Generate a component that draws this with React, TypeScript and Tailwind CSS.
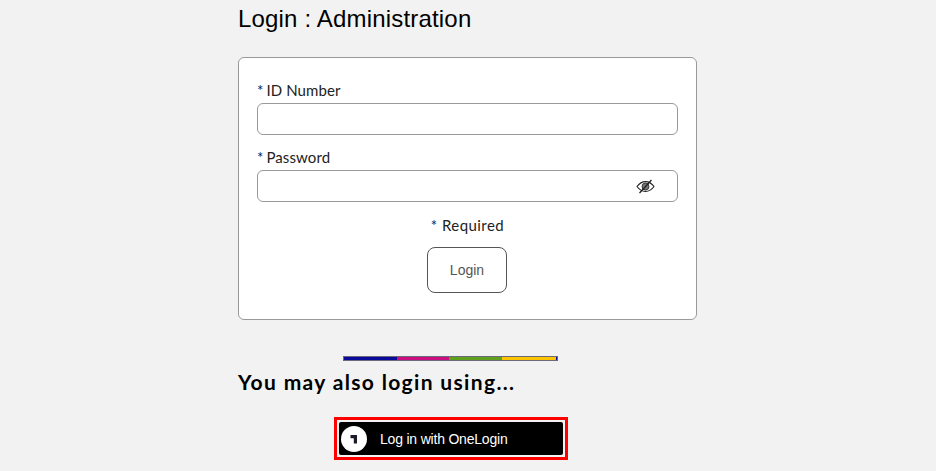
const gothic = "font-['Lato','Noto_Sans',sans-serif]";

function EyeOff() {
  return (
    <svg width="19" height="15" viewBox="0 0 19 15" fill="none" stroke="#222" strokeWidth="1.1">
      <path d="M1 7.500C3.500 4 6.300 2.600 9.500 2.600s6 1.400 8.500 4.900c-2.500 3.500-5.300 4.900-8.500 4.900S3.500 11 1 7.500z" />
      <circle cx="9.500" cy="7.500" r="3.500" fill="#777" strokeWidth="0.8" />
      <path d="M15.500 1L3.500 14" strokeWidth="1.300" />
    </svg>
  );
}

function OneLoginMark() {
  return (
    <svg width="26" height="26" viewBox="0 0 26 26">
      <circle cx="13" cy="13" r="13" fill="#fff" />
      <path d="M9.500 9h6.500v8.500h-3.200v-5.300h-3.300z" fill="#1c1c28" />
    </svg>
  );
}

function Field({ label, children }: { label: string; children?: React.ReactNode }) {
  return (
    <div>
      <label className={`block text-[15px] leading-[20px] tracking-[0.1px] text-[#222] ${gothic}`}>
        <span className="mr-[-1px] text-[#00205b]">*</span> {label}
      </label>
      <div className="mt-[3px] flex h-[32px] items-center justify-end rounded-[6px] border border-[#999] bg-white pr-[22px]">
        {children}
      </div>
    </div>
  );
}

export default function App() {
  return (
    <div className="h-[471px] overflow-hidden bg-[#f2f2f2] font-['Liberation_Sans',sans-serif]">
      <div className="ml-[238px] w-[459px]">
        <h1 className="pt-[5px] text-[24px] leading-[28px] tracking-[0.18px] text-black">Login : Administration</h1>

        <div className="mt-[24px] h-[263px] rounded-[6px] border border-[#999] bg-white px-[18px] pt-[22px]">
          <Field label="ID Number" />
          <div className="mt-[12px]">
            <Field label="Password">
              <EyeOff />
            </Field>
          </div>
          <p className={`mt-[13px] text-center text-[15px] leading-[20px] tracking-[0.45px] text-[#222] ${gothic}`}>
            <span className="text-[#00205b]">*</span> Required
          </p>
          <div className="mt-[12px] flex justify-center pr-[2px]">
            <button className="h-[46px] w-[80px] rounded-[8px] border border-[#555] bg-white pl-[1px] text-[14px] text-[#555]">
              Login
            </button>
          </div>
        </div>

        <div className="ml-[105px] mt-[36px] flex h-[5px] w-[215px] border border-[#6a6a7a] bg-[#0a0a9a]">
          <div className="w-[53px] bg-[#0a0a9a]" />
          <div className="w-[52px] bg-[#cc0f80]" />
          <div className="w-[53px] bg-[#5fa01c]" />
          <div className="w-[54px] bg-[#ffc400]" />
        </div>

        <h2 className={`mt-[9px] text-[21px] font-bold leading-[24px] tracking-[1.35px] text-black ${gothic}`}>
          You may also login using...
        </h2>

        <div className="ml-[96px] mt-[23px] w-[234px] border-[3px] border-[#ff0000] p-[2px]">
          <button className="flex h-[33px] w-full items-center rounded-[2px] bg-black pl-[2px] text-[14px] tracking-[-0.2px] text-white">
            <OneLoginMark />
            <span className="ml-[13px] pt-[1px]">Log in with OneLogin</span>
          </button>
        </div>
      </div>
    </div>
  );
}
